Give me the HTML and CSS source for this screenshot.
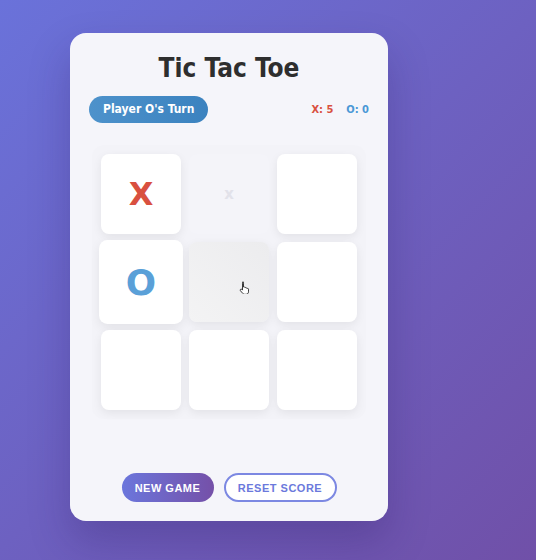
FILE: index.html
```html
<!DOCTYPE html>
<html>
<head>
<meta charset="utf-8">
<link rel="stylesheet" href="styles.css">
</head>
<body>
<div class="card">
  <h1 class="title">Tic Tac Toe</h1>
  <div class="info">
    <div class="status">Player O's Turn</div>
    <div class="scores"><span class="sx">X: 5</span><span class="so">O: 0</span></div>
  </div>
  <div class="board">
    <div class="cell"><span class="mx">X</span></div>
    <div class="cell ghost"><span class="gx">x</span></div>
    <div class="cell"></div>
    <div class="cell big"><span class="mo">O</span></div>
    <div class="cell hover">
      <svg class="cursor" width="12" height="13" viewBox="0 0 12 13"><path d="M3.5 1.2c.6 0 1 .4 1 1V6l.4-.1c.5-.1 1 .2 1.1.6l.1.1c.4-.2 1-.1 1.2.4.4-.2 1-.1 1.2.4.5-.1 1 .2 1 .8v2.6c0 1.4-1 2.5-2.4 2.5H5.6c-.7 0-1.3-.3-1.7-.8L1.4 9.7c-.4-.5-.3-1.1.2-1.4.4-.3 1-.2 1.3.1l.6.7V2.2c0-.6.4-1 1-1z" fill="#fff" stroke="#222" stroke-width="0.9"/></svg>
    </div>
    <div class="cell"></div>
    <div class="cell"></div>
    <div class="cell"></div>
    <div class="cell"></div>
  </div>
  <div class="actions">
    <button class="btn primary">NEW GAME</button>
    <button class="btn outline">RESET SCORE</button>
  </div>
</div>
</body>
</html>
```
FILE: styles.css
```css
html, body { margin: 0; padding: 0; }
body {
  width: 536px;
  height: 560px;
  background: linear-gradient(135deg, #6a72da 0%, #7050a8 100%);
  font-family: "DejaVu Sans Condensed", "DejaVu Sans", sans-serif;
  overflow: hidden;
}
.card {
  margin: 33px 0 0 70px;
  width: 318px;
  height: 488px;
  box-sizing: border-box;
  padding: 20px 19px 19px 19px;
  background: #f5f5fa;
  border-radius: 16px;
  box-shadow: 0 20px 40px rgba(40, 20, 90, 0.25);
  display: flex;
  flex-direction: column;
}
.title {
  margin: 0;
  text-align: center;
  font-size: 26px;
  font-weight: bold;
  color: #2e2e2e;
  line-height: 30px;
}
.info {
  margin-top: 13px;
  display: flex;
  align-items: center;
  justify-content: space-between;
}
.status {
  height: 27px;
  line-height: 27px;
  padding: 0 14px;
  border-radius: 14px;
  background: linear-gradient(90deg, #4d92cb, #3b82bf);
  color: #fff;
  font-weight: bold;
  font-size: 12px;
}
.scores {
  display: flex;
  gap: 13px;
  font-weight: bold;
  font-size: 11px;
}
.sx { color: #d9503f; }
.so { color: #4a98d6; }
.board {
  margin: 22px auto 0;
  padding: 9px;
  border-radius: 12px;
  background: #f3f3f8;
  display: grid;
  grid-template-columns: repeat(3, 80px);
  grid-template-rows: repeat(3, 80px);
  gap: 8px;
}
.cell {
  position: relative;
  background: #fff;
  border-radius: 8px;
  box-shadow: 0 3px 10px rgba(0, 0, 0, 0.07);
  display: flex;
  align-items: center;
  justify-content: center;
  font-family: "DejaVu Sans", sans-serif;
  font-weight: bold;
}
.mx { color: #d9503f; font-size: 32px; }
.mo { color: #5aa0d8; font-size: 34px; }
.ghost { background: #f4f4f9; box-shadow: none; }
.gx { color: #e2e2ea; font-size: 15px; }
.big { transform: scale(1.05); }
.hover { background: linear-gradient(45deg, #f3f3f4, #ececee); }
.cursor { position: absolute; left: 50px; top: 39px; }
.actions {
  margin-top: auto;
  display: flex;
  justify-content: center;
  gap: 10px;
}
.btn {
  height: 29px;
  box-sizing: border-box;
  border-radius: 15px;
  font-family: "Liberation Sans", Arial, sans-serif;
  font-weight: bold;
  font-size: 11px;
  letter-spacing: 0.5px;
  padding: 0;
  white-space: nowrap;
  cursor: pointer;
}
.primary {
  border: none;
  color: #fff;
  background: linear-gradient(90deg, #6b76dc, #7550a8);
  width: 92px;
}
.outline {
  border: 2px solid #7c88e2;
  color: #6b79dc;
  background: #fff;
  width: 113px;
}
```
